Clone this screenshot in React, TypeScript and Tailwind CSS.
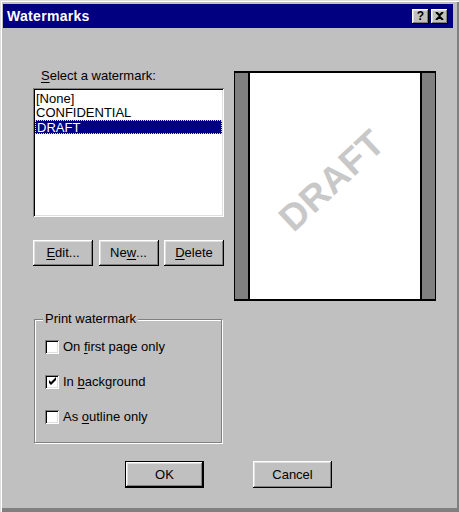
import React from 'react'

const raised =
  'bg-[#c0c0c0] shadow-[inset_-1px_-1px_0_#000,inset_1px_1px_0_#fff,inset_-2px_-2px_0_#808080,inset_2px_2px_0_#dfdfdf]'
const sunken =
  'shadow-[inset_1px_1px_0_#808080,inset_-1px_-1px_0_#fff,inset_2px_2px_0_#000,inset_-2px_-2px_0_#dfdfdf]'

function Mn({ children }: { children: React.ReactNode }) {
  return <span className="underline underline-offset-2 decoration-1">{children}</span>
}

function PushButton({ children, wide, isDefault }: { children: React.ReactNode; wide?: boolean; isDefault?: boolean }) {
  const size = wide ? 'w-[79px] h-[27px]' : 'w-[60px] h-[26px]'
  if (isDefault) {
    return (
      <div className={`${size} border border-black`}>
        <button className={`${raised} w-full h-full flex items-center justify-center text-[13px] text-black`}>
          {children}
        </button>
      </div>
    )
  }
  return (
    <button className={`${raised} ${size} flex items-center justify-center text-[13px] text-black`}>
      {children}
    </button>
  )
}

function Check({ checked, children }: { checked?: boolean; children: React.ReactNode }) {
  return (
    <div className="flex items-center h-[15px]">
      <div className={`${sunken} w-[14px] h-[14px] bg-white flex items-center justify-center`}>
        {checked && (
          <svg width="9" height="9" viewBox="0 0 9 9">
            <path d="M1 3 L3 5 L8 0 L8 3 L3 8 L1 6 Z" fill="#000" />
          </svg>
        )}
      </div>
      <span className="ml-[4px] text-[13px] text-black leading-[15px]">{children}</span>
    </div>
  )
}

export default function App() {
  const items = ['[None]', 'CONFIDENTIAL', 'DRAFT']

  return (
    <div
      className="w-[459px] h-[512px] bg-[#c0c0c0] pl-[3px] pr-[6px] pt-[4px] shadow-[inset_1px_1px_0_#dfdfdf,inset_2px_2px_0_#fff,inset_-2px_-4px_0_#808080,inset_-1px_-1px_0_#000]"
      style={{ fontFamily: '"Liberation Sans", Arial, sans-serif' }}
    >
      {/* title bar */}
      <div className="h-[24px] bg-[#000080] flex items-center justify-between pl-[4px] pr-[5px]">
        <span className="text-white font-bold text-[14px] tracking-[0.3px]">Watermarks</span>
        <div className="flex gap-[2px]">
          <div className={`${raised} w-[17px] h-[15px] flex items-center justify-center`}>
            <span className="text-[12px] font-bold leading-none text-black">?</span>
          </div>
          <div className={`${raised} w-[17px] h-[15px] flex items-center justify-center`}>
            <svg width="9" height="8" viewBox="0 0 9 8">
              <path d="M1 0 L4.5 3.3 L8 0 M1 8 L4.5 4.7 L8 8" stroke="#000" strokeWidth="2" fill="none" />
            </svg>
          </div>
        </div>
      </div>

      {/* body */}
      <div className="flex items-start pl-[30px]">
        <div className="w-[191px] mt-[40px]">
          <div className="pl-[8px] text-[13px] leading-[15px] text-black">
            <Mn>S</Mn>elect a watermark:
          </div>
          <div className={`${sunken} mt-[5px] h-[129px] bg-white pt-[4px] px-[2px]`}>
            {items.map((it) => (
              <div
                key={it}
                className={`h-[14px] leading-[14px] text-[13px] pl-[1px] ${
                  it === 'DRAFT' ? 'bg-[#000080] text-white border border-dotted border-[#e8e8a0]' : 'text-black'
                }`}
              >
                {it}
              </div>
            ))}
          </div>

          <div className="mt-[23px] flex justify-between">
            <PushButton>
              <Mn>E</Mn>dit...
            </PushButton>
            <PushButton>
              Ne<Mn>w</Mn>...
            </PushButton>
            <PushButton>
              <Mn>D</Mn>elete
            </PushButton>
          </div>

          {/* group box */}
          <div className="mt-[53px] ml-[1px] w-[188px] h-[124px] border border-[#808080] shadow-[1px_1px_0_#fff,inset_1px_1px_0_#fff] relative">
            <div className="absolute -top-[9px] left-[8px] bg-[#c0c0c0] px-[2px] text-[13px] leading-[16px] text-black">
              Print watermark
            </div>
            <div className="pl-[10px] pt-[19px] flex flex-col gap-[20px]">
              <Check>
                On <Mn>f</Mn>irst page only
              </Check>
              <Check checked>
                In <Mn>b</Mn>ackground
              </Check>
              <Check>
                As <Mn>o</Mn>utline only
              </Check>
            </div>
          </div>
        </div>

        {/* preview */}
        <div className="ml-[10px] mt-[43px] w-[202px] h-[230px] bg-[#808080] border-y-2 border-x border-black px-[13px]">
          <div className="h-full bg-white border-x-2 border-black flex items-center justify-center overflow-hidden">
            <span className="-rotate-[43deg] -translate-x-[3px] -translate-y-[5px] text-[37px] font-bold text-[#c8c8c8] tracking-[0.5px]">
              DRAFT
            </span>
          </div>
        </div>
      </div>

      {/* dialog buttons */}
      <div className="flex gap-[49px] pl-[122px] mt-[18px]">
        <PushButton wide isDefault>
          OK
        </PushButton>
        <PushButton wide>Cancel</PushButton>
      </div>
    </div>
  )
}
